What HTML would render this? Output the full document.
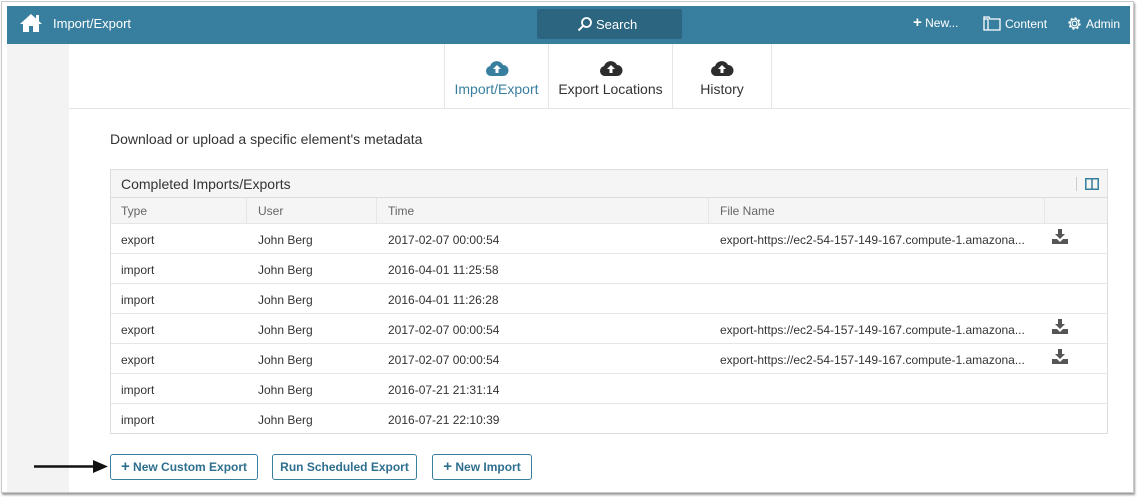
<!DOCTYPE html>
<html><head><style>
*{box-sizing:border-box;margin:0;padding:0}
body{width:1137px;height:497px;background:#fff;font-family:"Liberation Sans",sans-serif;position:relative;overflow:hidden}
.frame{position:absolute;left:1px;top:1px;width:1133px;height:492px;border:1px solid #c8c8c8;box-shadow:1px 2px 2px #999;background:#fff}
.hdr{position:absolute;left:7px;top:6px;width:1123px;height:38px;background:#387f9f;color:#fff}
.side{position:absolute;left:7px;top:44px;width:62px;height:448px;background:#f3f3f3}
.abs{position:absolute}
.tabs{position:absolute;left:69px;top:44px;width:1061px;height:65px;border-bottom:1px solid #e5e5e5}
.tab{position:absolute;top:0;height:64px;border-left:1px solid #e6e6e6;text-align:center;font-size:14px;color:#333}
.tab svg{display:block;margin:15px auto 4px}
.tbl{position:absolute;left:110px;top:169px;width:998px;border:1px solid #ddd}
.cap{height:28px;background:#f5f5f5;border-bottom:1px solid #ddd;font-size:14px;color:#333;padding:6px 10px;position:relative}
.row{height:30px;border-top:1px solid #e6e6e6;position:relative;font-size:12px;color:#333}
.row span{position:absolute;top:9px}
.hrow{height:25px;background:#f5f5f5;color:#666;border-top:none}
.hrow span{top:6px}
.btn{position:absolute;top:454px;height:26px;border:1px solid #387f9f;border-radius:3px;color:#2f6f8e;font-size:12px;font-weight:bold;text-align:center;line-height:24px}
</style></head><body>
<div class="frame"></div>
<div class="hdr">
<svg class="abs" style="left:12px;top:7px" width="24" height="20" viewBox="0 0 24 20"><path d="M12 1 L1 11 L4 11 L4 19 L10 19 L10 13 L14 13 L14 19 L20 19 L20 11 L23 11 Z" fill="#fff"/><rect x="17" y="2" width="3" height="6" fill="#fff"/></svg>
<div class="abs" style="left:46px;top:10px;font-size:13px">Import/Export</div>
<div class="abs" style="left:530px;top:3px;width:145px;height:30px;background:#2b6580;border-radius:2px"></div>
<svg class="abs" style="left:570px;top:10px" width="16" height="16" viewBox="0 0 16 16"><circle cx="9.5" cy="6.5" r="4.5" stroke="#fff" stroke-width="1.8" fill="none"/><line x1="6.3" y1="9.7" x2="1.5" y2="14.5" stroke="#fff" stroke-width="2"/></svg>
<div class="abs" style="left:589px;top:11px;font-size:13px">Search</div>
<div class="abs" style="left:906px;top:10px;font-size:12px"><b style="font-size:15px;line-height:12px">+</b> New...</div>
<svg class="abs" style="left:976px;top:10px" width="18" height="15" viewBox="0 0 18 15"><path d="M1 1h5l1 2h10v11H1z M1 3h4v11" stroke="#fff" stroke-width="1.3" fill="none"/></svg>
<div class="abs" style="left:998px;top:11px;font-size:12px">Content</div>
<svg class="abs" style="left:1060px;top:10px" width="15" height="15" viewBox="0 0 16 16"><circle cx="8" cy="8" r="2.5" stroke="#fff" stroke-width="1.3" fill="none"/><circle cx="8" cy="8" r="5.5" stroke="#fff" stroke-width="2.2" stroke-dasharray="2.2 2.1" fill="none"/><circle cx="8" cy="8" r="4.6" stroke="#fff" stroke-width="1.2" fill="none"/></svg>
<div class="abs" style="left:1079px;top:11px;font-size:12px">Admin</div>
</div>
<div class="side"></div>
<div class="tabs">
<div class="tab" style="left:375px;width:104px;color:#387f9f"><svg width="24" height="18" viewBox="0 0 24 18"><path d="M6 17a5 5 0 0 1-1-9.9A7 7 0 0 1 18 6a5.5 5.5 0 0 1 0 11z" fill="#387f9f"/><path d="M12 6l-4 4h2.5v4h3v-4H16z" fill="#fff"/></svg>Import/Export</div>
<div class="tab" style="left:479px;width:124px"><svg width="24" height="18" viewBox="0 0 24 18"><path d="M6 17a5 5 0 0 1-1-9.9A7 7 0 0 1 18 6a5.5 5.5 0 0 1 0 11z" fill="#2d2d2d"/><path d="M12 6l-4 4h2.5v4h3v-4H16z" fill="#fff"/></svg>Export Locations</div>
<div class="tab" style="left:603px;width:100px;border-right:1px solid #e6e6e6"><svg width="24" height="18" viewBox="0 0 24 18"><path d="M6 17a5 5 0 0 1-1-9.9A7 7 0 0 1 18 6a5.5 5.5 0 0 1 0 11z" fill="#2d2d2d"/><path d="M12 6l-4 4h2.5v4h3v-4H16z" fill="#fff"/></svg>History</div>
</div>
<div class="abs" style="left:110px;top:131px;font-size:14px;color:#333">Download or upload a specific element's metadata</div>
<div class="tbl">
<div class="cap">Completed Imports/Exports
<div class="abs" style="left:965px;top:7px;width:1px;height:14px;background:#ccc"></div>
<svg class="abs" style="left:974px;top:8px" width="14" height="12" viewBox="0 0 14 12"><rect x="0.75" y="0.75" width="12.5" height="10.5" fill="none" stroke="#387f9f" stroke-width="1.5"/><line x1="7" y1="1" x2="7" y2="11" stroke="#387f9f" stroke-width="1.5"/></svg></div>
<div class="row hrow"><span style="left:10px">Type</span><span style="left:147px">User</span><span style="left:277px">Time</span><span style="left:609px">File Name</span>
<div class="abs" style="left:135px;top:0;width:1px;height:25px;background:#e6e6e6"></div><div class="abs" style="left:265px;top:0;width:1px;height:25px;background:#e6e6e6"></div><div class="abs" style="left:597px;top:0;width:1px;height:25px;background:#e6e6e6"></div><div class="abs" style="left:933px;top:0;width:1px;height:25px;background:#e6e6e6"></div></div>
<div class="row"><span style="left:10px">export</span><span style="left:147px">John Berg</span><span style="left:277px">2017-02-07 00:00:54</span><span style="left:609px">export-https://ec2-54-157-149-167.compute-1.amazona...</span><svg class="abs" style="left:941px;top:5px" width="16" height="15" viewBox="0 0 16 15"><path d="M6 0h4v5h3l-5 5-5-5h3z" fill="#555"/><path d="M0 10h5l3 3 3-3h5v5H0z" fill="#555"/></svg></div>
<div class="row"><span style="left:10px">import</span><span style="left:147px">John Berg</span><span style="left:277px">2016-04-01 11:25:58</span></div>
<div class="row"><span style="left:10px">import</span><span style="left:147px">John Berg</span><span style="left:277px">2016-04-01 11:26:28</span></div>
<div class="row"><span style="left:10px">export</span><span style="left:147px">John Berg</span><span style="left:277px">2017-02-07 00:00:54</span><span style="left:609px">export-https://ec2-54-157-149-167.compute-1.amazona...</span><svg class="abs" style="left:941px;top:5px" width="16" height="15" viewBox="0 0 16 15"><path d="M6 0h4v5h3l-5 5-5-5h3z" fill="#555"/><path d="M0 10h5l3 3 3-3h5v5H0z" fill="#555"/></svg></div>
<div class="row"><span style="left:10px">export</span><span style="left:147px">John Berg</span><span style="left:277px">2017-02-07 00:00:54</span><span style="left:609px">export-https://ec2-54-157-149-167.compute-1.amazona...</span><svg class="abs" style="left:941px;top:5px" width="16" height="15" viewBox="0 0 16 15"><path d="M6 0h4v5h3l-5 5-5-5h3z" fill="#555"/><path d="M0 10h5l3 3 3-3h5v5H0z" fill="#555"/></svg></div>
<div class="row"><span style="left:10px">import</span><span style="left:147px">John Berg</span><span style="left:277px">2016-07-21 21:31:14</span></div>
<div class="row"><span style="left:10px">import</span><span style="left:147px">John Berg</span><span style="left:277px">2016-07-21 22:10:39</span></div>
</div>
<div class="btn" style="left:110px;width:148px"><span style="font-size:15px">+</span> New Custom Export</div>
<div class="btn" style="left:272px;width:145px">Run Scheduled Export</div>
<div class="btn" style="left:432px;width:100px"><span style="font-size:15px">+</span> New Import</div>
<svg class="abs" style="left:33px;top:459px" width="76" height="15" viewBox="0 0 76 15"><line x1="1" y1="7.5" x2="62" y2="7.5" stroke="#111" stroke-width="2.5"/><path d="M60 1 L75 7.5 L60 14z" fill="#111"/></svg>
</body></html>
